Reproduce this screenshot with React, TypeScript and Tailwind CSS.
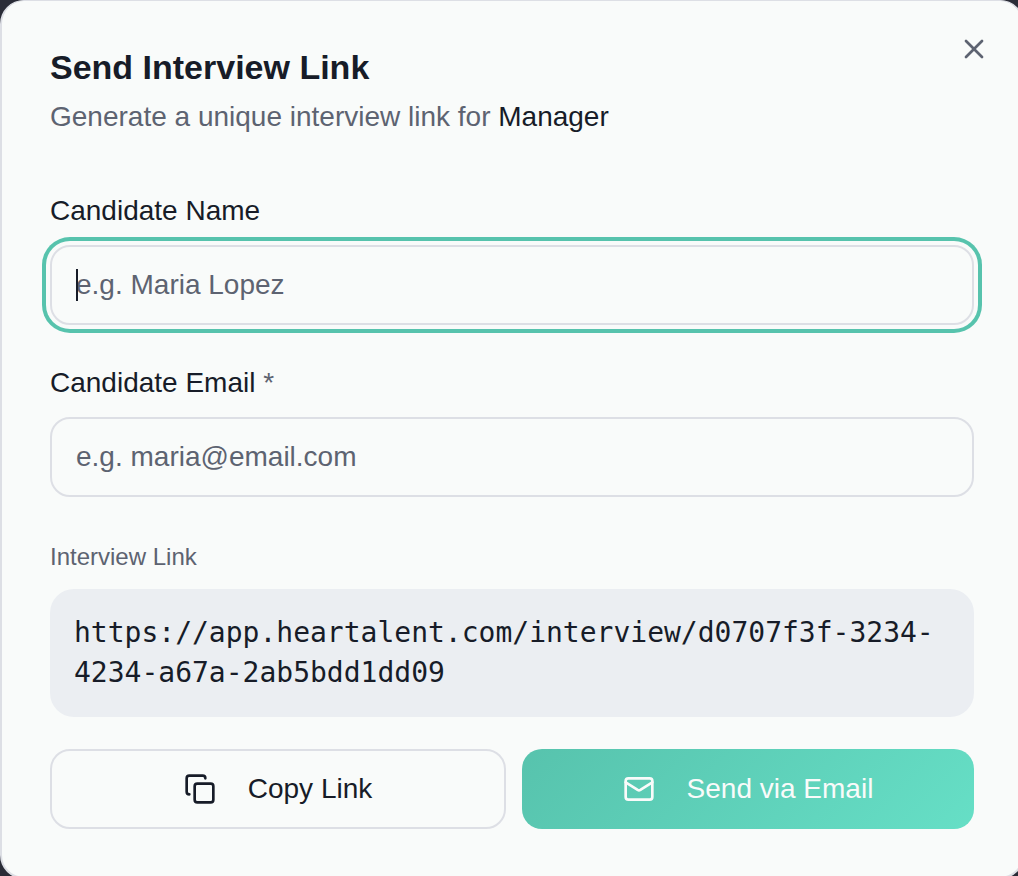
import { Copy, Mail, X } from "lucide-react";
import { useState } from "react";

const fields = [
  { id: "candidate-name", label: "Candidate Name", placeholder: "e.g. Maria Lopez", type: "text" },
  { id: "candidate-email", label: "Candidate Email", placeholder: "e.g. maria@email.com", type: "email", required: true },
];

const interviewLink = "https://app.heartalent.com/interview/d0707f3f-3234-4234-a67a-2ab5bdd1dd09";

function Field({ id, label, placeholder, type, required, autoFocus }: {
  id: string;
  label: string;
  placeholder: string;
  type: string;
  required?: boolean;
  autoFocus?: boolean;
}) {
  const [value, setValue] = useState("");

  return (
    <div className="flex flex-col gap-3">
      <label htmlFor={id} className="leading-11">
        {label}
        {required && <span className="text-[#5d6371]"> *</span>}
      </label>
      <div className="relative flex items-center">
        <input
          id={id}
          type={type}
          value={value}
          onChange={(e) => setValue(e.target.value)}
          placeholder={placeholder}
          autoFocus={autoFocus}
          className="peer h-20 w-full rounded-[20px] border-2 border-[#dddfe5] bg-[#f9fbfa] px-6 caret-[#171c28] outline-none placeholder-shown:caret-transparent placeholder:text-[#5d6371] focus:ring-4 focus:ring-[#57c3ad] focus:ring-offset-4 focus:ring-offset-[#f9fbfa]"
        />
        {/* caret for the empty field */}
        <span
          aria-hidden="true"
          className="pointer-events-none absolute left-[26px] hidden h-8 w-0.5 bg-[#171c28] peer-focus:peer-placeholder-shown:block"
        />
      </div>
    </div>
  );
}

export default function App() {
  return (
    <div className="overflow-hidden bg-[#2a2c37] font-['Liberation_Sans',Arial,sans-serif] text-[28px] text-[#171c28]">
      <div
        role="dialog"
        aria-labelledby="dialog-title"
        className="relative -mr-1.5 rounded-3xl border-2 border-t border-[#dddfe5] bg-[#f9fbfa] p-12"
      >
        <button type="button" aria-label="Close" className="absolute top-8 right-8 text-[#5d6371]">
          <X size={32} />
        </button>

        <header className="flex flex-col gap-3">
          <h2 id="dialog-title" className="text-[34px] leading-9 font-bold">Send Interview Link</h2>
          <p className="leading-10 text-[#5d6371]">
            Generate a unique interview link for <span className="text-[#171c28]">Manager</span>
          </p>
        </header>

        <form className="mt-13 flex flex-col gap-9">
          {fields.map((field, i) => (
            <Field key={field.id} {...field} autoFocus={i === 0} />
          ))}
        </form>

        <section className="mt-11 flex flex-col gap-4">
          <h3 className="text-2xl text-[#5d6371]">Interview Link</h3>
          <p className="rounded-3xl bg-[#ebeef2] p-6 font-['DejaVu_Sans_Mono',Menlo,monospace] leading-10 break-all">
            {interviewLink}
          </p>
        </section>

        <div className="mt-8 flex gap-4">
          <button type="button" className="flex h-20 flex-1 items-center justify-center gap-8 rounded-[20px] border-2 border-[#dddfe5]">
            <Copy size={32} />
            Copy Link
          </button>
          <button type="button" className="flex h-20 flex-1 items-center justify-center gap-8 rounded-[20px] bg-linear-135 from-[#57c3ad] to-[#66dfc6] text-[#f9fbfa]">
            <Mail size={32} />
            Send via Email
          </button>
        </div>
      </div>
    </div>
  );
}
